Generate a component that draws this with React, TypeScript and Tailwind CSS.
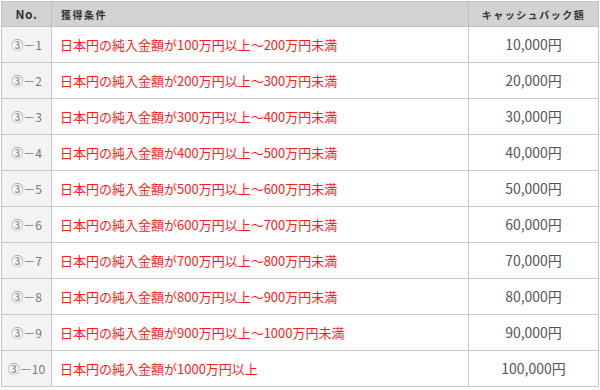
import React from "react";

const rows = [
  { no: "③－1", cond: "日本円の純入金額が100万円以上〜200万円未満", amt: "10,000円" },
  { no: "③－2", cond: "日本円の純入金額が200万円以上〜300万円未満", amt: "20,000円" },
  { no: "③－3", cond: "日本円の純入金額が300万円以上〜400万円未満", amt: "30,000円" },
  { no: "③－4", cond: "日本円の純入金額が400万円以上〜500万円未満", amt: "40,000円" },
  { no: "③－5", cond: "日本円の純入金額が500万円以上〜600万円未満", amt: "50,000円" },
  { no: "③－6", cond: "日本円の純入金額が600万円以上〜700万円未満", amt: "60,000円" },
  { no: "③－7", cond: "日本円の純入金額が700万円以上〜800万円未満", amt: "70,000円" },
  { no: "③－8", cond: "日本円の純入金額が800万円以上〜900万円未満", amt: "80,000円" },
  { no: "③－9", cond: "日本円の純入金額が900万円以上〜1000万円未満", amt: "90,000円" },
  { no: "③－10", cond: "日本円の純入金額が1000万円以上", amt: "100,000円" },
];

export default function App() {
  return (
    <div
      className="w-[600px] h-[390px] bg-white pl-[1px] pt-[1px] overflow-hidden"
      style={{ fontFamily: '"Noto Sans CJK JP", "Noto Sans", sans-serif' }}
    >
      <table className="w-[597px] border-collapse border border-[#a8a8a8] table-fixed">
        <colgroup>
          <col className="w-[50px]" />
          <col className="w-[417px]" />
          <col className="w-[130px]" />
        </colgroup>
        <thead>
          <tr className="h-[25px] bg-[#d2d2d2]">
            <th className="border border-[#c0c0c0] text-[12px] font-bold text-[#333] text-center tracking-[0.5px] p-0">
              No.
            </th>
            <th className="border border-[#c0c0c0] text-[10px] font-bold text-[#333] text-left pl-[9px] tracking-[1.5px] p-0">
              獲得条件
            </th>
            <th className="border border-[#c0c0c0] text-[10px] font-bold text-[#333] text-center tracking-[1.5px] p-0">
              キャッシュバック額
            </th>
          </tr>
        </thead>
        <tbody>
          {rows.map((r) => (
            <tr key={r.no} className="h-[36px]">
              <td className="border border-[#c8c8c8] bg-[#f3f3f3] text-center text-[12px] text-[#777] p-0 whitespace-nowrap">
                {r.no}
              </td>
              <td className="border border-[#c8c8c8] text-left pl-[8px] text-[13px] text-[#ff1a1a] p-0 whitespace-nowrap">
                {r.cond}
              </td>
              <td className="border border-[#c8c8c8] text-center text-[14px] text-[#555] p-0 whitespace-nowrap">
                {r.amt}
              </td>
            </tr>
          ))}
        </tbody>
      </table>
    </div>
  );
}
